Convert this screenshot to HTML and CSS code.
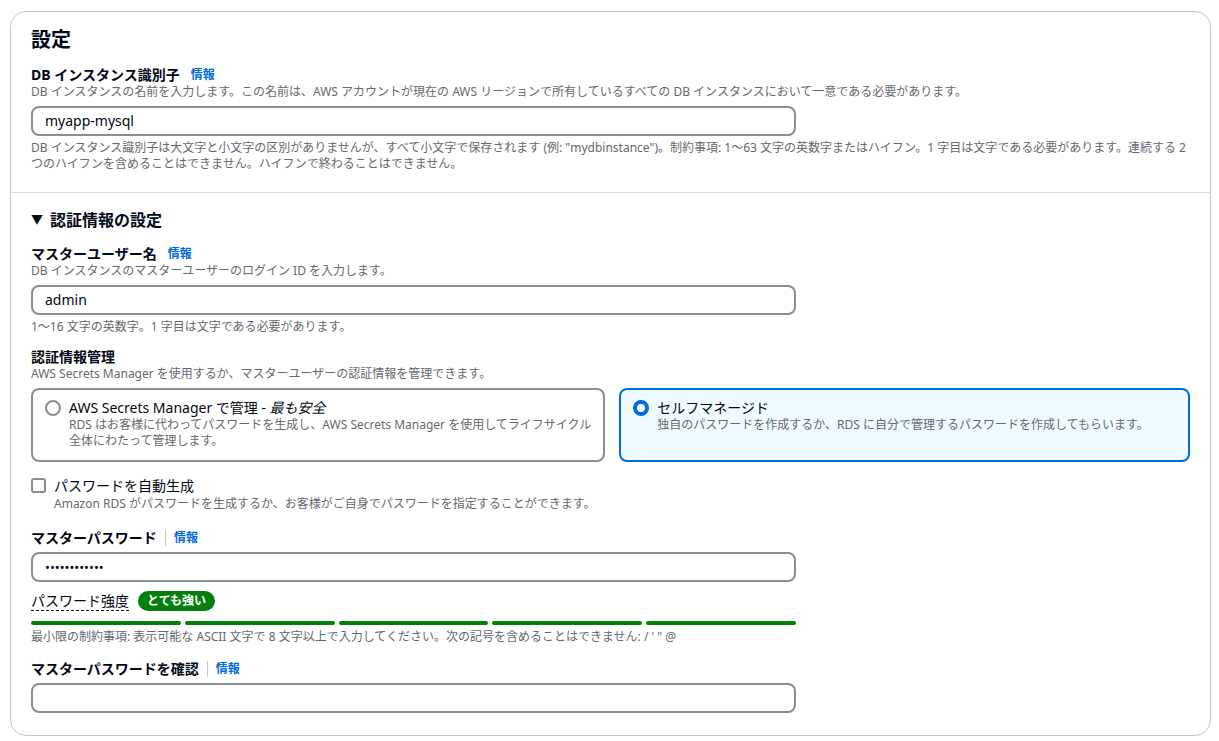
FILE: index.html
```html
<!DOCTYPE html>
<html lang="ja">
<head>
<meta charset="utf-8">
<title>設定</title>
<link rel="stylesheet" href="styles.css">
</head>
<body>
<div class="card">
  <section class="sec sec-top">
    <h2 class="title">設定</h2>
    <div class="field f-first">
      <div class="label">DB インスタンス識別子<a class="info">情報</a></div>
      <div class="desc">DB インスタンスの名前を入力します。この名前は、AWS アカウントが現在の AWS リージョンで所有しているすべての DB インスタンスにおいて一意である必要があります。</div>
      <div class="input">myapp-mysql</div>
      <div class="constraint">DB インスタンス識別子は大文字と小文字の区別がありませんが、すべて小文字で保存されます (例: "mydbinstance")。制約事項: 1～63 文字の英数字またはハイフン。1 字目は文字である必要があります。連続する 2 つのハイフンを含めることはできません。ハイフンで終わることはできません。</div>
    </div>
  </section>
  <section class="sec sec-bottom">
    <h3 class="sub"><span class="caret">▼</span>認証情報の設定</h3>
    <div class="field f-user">
      <div class="label">マスターユーザー名<a class="info">情報</a></div>
      <div class="desc">DB インスタンスのマスターユーザーのログイン ID を入力します。</div>
      <div class="input">admin</div>
      <div class="constraint">1～16 文字の英数字。1 字目は文字である必要があります。</div>
    </div>
    <div class="field f-cred">
      <div class="label">認証情報管理</div>
      <div class="desc">AWS Secrets Manager を使用するか、マスターユーザーの認証情報を管理できます。</div>
      <div class="tiles">
        <div class="tile">
          <span class="radio"></span>
          <div class="tile-body">
            <div class="tile-title">AWS Secrets Manager で管理 - <em>最も安全</em></div>
            <div class="tile-desc"><span class="nowrap">RDS はお客様に代わってパスワードを生成し、AWS Secrets Manager を使用してライフサイクル</span><br>全体にわたって管理します。</div>
          </div>
        </div>
        <div class="tile tile-on">
          <span class="radio radio-on"></span>
          <div class="tile-body">
            <div class="tile-title">セルフマネージド</div>
            <div class="tile-desc">独自のパスワードを作成するか、RDS に自分で管理するパスワードを作成してもらいます。</div>
          </div>
        </div>
      </div>
    </div>
    <div class="check-row">
      <span class="checkbox"></span>
      <div>
        <div class="check-label">パスワードを自動生成</div>
        <div class="desc">Amazon RDS がパスワードを生成するか、お客様がご自身でパスワードを指定することができます。</div>
      </div>
    </div>
    <div class="field f-pass">
      <div class="label">マスターパスワード<span class="sep"></span><a class="info info-sep">情報</a></div>
      <div class="input input-pass">••••••••••••</div>
      <div class="strength">
        <span class="strength-label">パスワード強度</span>
        <span class="badge">とても強い</span>
      </div>
      <div class="bars">
        <span class="bar"></span><span class="bar"></span><span class="bar"></span><span class="bar"></span><span class="bar"></span>
      </div>
      <div class="constraint">最小限の制約事項: 表示可能な ASCII 文字で 8 文字以上で入力してください。次の記号を含めることはできません: / ' " @</div>
    </div>
    <div class="field f-confirm">
      <div class="label">マスターパスワードを確認<span class="sep"></span><a class="info info-sep">情報</a></div>
      <div class="input"></div>
    </div>
  </section>
</div>
</body>
</html>
```

FILE: styles.css
```css
* { box-sizing: border-box; }
html, body { margin: 0; padding: 0; background: #ffffff; }
body {
  font-family: "Noto Sans", "Noto Sans CJK JP", sans-serif;
  color: #000716;
  font-size: 14px;
  line-height: 20px;
}
.card {
  margin: 11px 8px 6px 10px;
  width: 1201px;
  border: 1px solid #c6c6cd;
  border-radius: 16px;
  background: #fff;
}
.sec { padding: 0 20px; }
.sec-top {
  padding-top: 16px;
  padding-bottom: 20px;
  border-bottom: 1px solid #dcdde0;
}
.sec-bottom {
  padding-top: 17px;
  padding-bottom: 22px;
}
.title {
  margin: 0;
  font-size: 20px;
  line-height: 24px;
  font-weight: 700;
}
.sub {
  margin: 0;
  font-size: 16px;
  line-height: 20px;
  font-weight: 700;
  display: flex;
  align-items: center;
}
.caret { font-size: 12px; margin-right: 7px; }
.field { display: flex; flex-direction: column; }
.f-first { margin-top: 14px; }
.f-user { margin-top: 15px; }
.f-cred { margin-top: 13px; }
.f-pass { margin-top: 17px; }
.f-confirm { margin-top: 15px; }
.label {
  font-size: 14px;
  line-height: 18px;
  font-weight: 700;
  display: flex;
  align-items: center;
}
.info {
  font-size: 12px;
  font-weight: 700;
  color: #006ce0;
  margin-left: 11px;
  line-height: 16px;
}
.info-sep { margin-left: 0; }
.sep {
  display: inline-block;
  width: 1px;
  height: 16px;
  background: #c6c6cd;
  margin: 0 8px 0 8px;
}
.desc {
  font-size: 12px;
  line-height: 16px;
  color: #656871;
}
.input {
  margin-top: 6px;
  width: 765px;
  height: 30px;
  border: 2px solid #8c8c94;
  border-radius: 8px;
  padding: 0 12px;
  font-size: 14px;
  line-height: 26px;
  color: #000716;
}
.f-pass .input, .f-confirm .input { margin-top: 5px; }
.input-pass { font-size: 13px; letter-spacing: 0; }
.constraint {
  margin-top: 4px;
  font-size: 12px;
  line-height: 16px;
  color: #656871;
}
.tiles {
  margin-top: 6px;
  display: grid;
  grid-template-columns: 1fr 1fr;
  gap: 14px;
}
.tile {
  height: 74px;
  border: 2px solid #8c8c94;
  border-radius: 8px;
  padding: 9px 12px;
  display: flex;
  gap: 8px;
}
.tile-on {
  border-color: #006ce0;
  background: #f0fbff;
}
.radio {
  flex: none;
  width: 16px;
  height: 16px;
  margin-top: 1px;
  border: 2px solid #8c8c94;
  border-radius: 50%;
  background: #fff;
}
.radio-on {
  border: 4px solid #006ce0;
}
.tile-title { font-size: 14px; line-height: 18px; }
.tile-title em { font-style: italic; }
.tile-desc {
  font-size: 12px;
  line-height: 16px;
  color: #656871;
}
.nowrap { white-space: nowrap; }
.check-row {
  margin-top: 16px;
  display: flex;
  gap: 8px;
}
.checkbox {
  flex: none;
  width: 15px;
  height: 15px;
  margin-top: 0;
  border: 2px solid #8c8c94;
  border-radius: 3px;
  background: #fff;
}
.check-label { font-size: 14px; line-height: 16px; }
.check-row .desc { margin-top: 2px; }
.strength {
  margin-top: 9px;
  display: flex;
  align-items: center;
  gap: 9px;
}
.strength-label {
  font-size: 14px;
  line-height: 18px;
  border-bottom: 1px dashed #000716;
}
.badge {
  background: #037f0c;
  color: #fff;
  font-size: 12px;
  font-weight: 700;
  line-height: 20px;
  padding: 0 9px;
  border-radius: 10px;
}
.bars {
  margin-top: 10px;
  width: 765px;
  display: flex;
  gap: 4px;
}
.bar {
  flex: 1;
  height: 4px;
  background: #037f0c;
  border-radius: 2px;
}
.f-pass .constraint { margin-top: 4px; }
```
